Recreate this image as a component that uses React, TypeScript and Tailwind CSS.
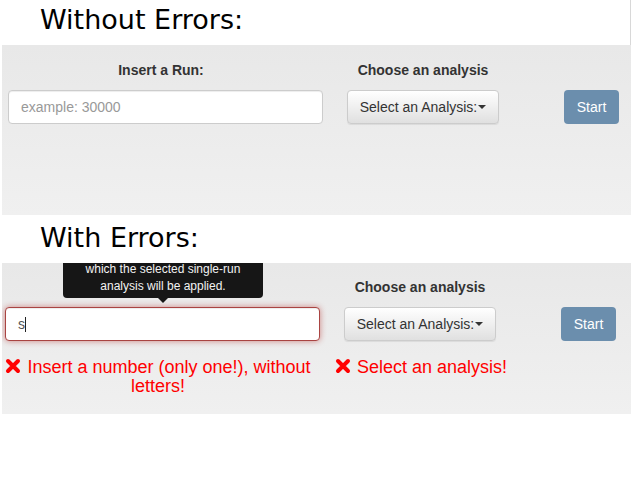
import React from "react";

function XIcon({ className = "" }: { className?: string }) {
  return (
    <svg viewBox="0 0 16 16" className={className} aria-hidden>
      <path d="M3 3 L13 13 M13 3 L3 13" stroke="#ff0000" strokeWidth="4" strokeLinecap="round" fill="none" />
    </svg>
  );
}

function Caret() {
  return (
    <span className="inline-block ml-[1px] align-middle w-0 h-0 border-t-[4px] border-t-[#333] border-x-[4px] border-x-transparent" />
  );
}

function AnalysisDropdown() {
  return (
    <div className="h-[34px] w-[152px] flex items-center justify-center rounded-[4px] border border-[#cccccc] bg-gradient-to-b from-white to-[#e0e0e0] shadow-[inset_0_1px_0_rgba(255,255,255,.15),0_1px_1px_rgba(0,0,0,.075)] text-[14px] text-[#333]">
      Select an Analysis:
      <Caret />
    </div>
  );
}

function StartButton() {
  return (
    <div className="h-[34px] w-[55px] flex items-center justify-center rounded-[4px] bg-[#6b8ead] text-[14px] text-white">
      Start
    </div>
  );
}

function Panel({ errors }: { errors: boolean }) {
  const pad = errors ? "pl-[3px] pt-[14px] h-[151px]" : "pl-[6px] pt-[15px] h-[170px]";
  return (
    <div className={`relative ml-[2px] w-[629px] overflow-hidden bg-gradient-to-b from-[#e8e8e8] to-[#f0f0f0] ${pad}`}>
      <div className="flex items-start">
        {/* run column */}
        <div className="w-[315px] flex flex-col">
          <div className="h-[20px] leading-[20px] pr-[9px] text-center text-[14px] font-bold text-[#333]">Insert a Run:</div>
          <div className="relative mt-[10px]">
            {errors && (
              <div className="absolute left-[58px] bottom-[38px] w-[200px] z-10">
                <div className="rounded-[4px] bg-[#161616] px-[8px] py-[3px] text-center text-[12px] leading-[17px] text-[#f2f2f2]">
                  Insert the run number to
                  <br />
                  which the selected single-run
                  <br />
                  analysis will be applied.
                </div>
                <div className="mx-auto w-0 h-0 border-t-[5px] border-t-[#161616] border-x-[5px] border-x-transparent" />
              </div>
            )}
            <div
              className={`h-[34px] w-[315px] flex items-center rounded-[4px] bg-white px-[12px] text-[14px] ${
                errors
                  ? "border border-[#a94442] shadow-[inset_0_1px_1px_rgba(0,0,0,.075),0_0_6px_#ce8483]"
                  : "border border-[#cccccc] shadow-[inset_0_1px_1px_rgba(0,0,0,.075)]"
              }`}
            >
              {errors ? (
                <>
                  <span className="text-[#555]">s</span>
                  <span className="inline-block w-[1px] h-[15px] bg-[#222]" />
                </>
              ) : (
                <span className="text-[#999]">example: 30000</span>
              )}
            </div>
          </div>
          {errors && (
            <div className="mt-[17px] w-[306px] text-center text-[18px] leading-[19px] text-[#ff0000] whitespace-nowrap">
              <XIcon className="inline-block w-[16px] h-[16px] mr-[6px] align-[-1px]" />
              Insert a number (only one!), without
              <br />
              letters!
            </div>
          )}
        </div>

        {/* analysis column */}
        <div className="ml-[15px] w-[170px] flex flex-col items-center">
          <div className="h-[20px] leading-[20px] text-center text-[14px] font-bold text-[#333]">Choose an analysis</div>
          <div className="mt-[10px]">
            <AnalysisDropdown />
          </div>
          {errors && (
            <div className="self-start mt-[17px] text-[18px] leading-[19px] text-[#ff0000] whitespace-nowrap">
              <XIcon className="inline-block w-[16px] h-[16px] mr-[6px] align-[-1px]" />
              Select an analysis!
            </div>
          )}
        </div>

        {/* start column */}
        <div className="ml-[56px] pt-[30px]">
          <StartButton />
        </div>
      </div>
    </div>
  );
}

export default function App() {
  return (
    <div className="w-[632px] h-[499px] bg-white font-['Liberation_Sans',Arial,sans-serif]">
      <div className="h-[45px] w-[631px] border-r border-[#d8d8d8] pl-[40px] pt-[5px] text-[27px] leading-[30px] text-black font-['DejaVu_Sans',sans-serif]">
        Without Errors:
      </div>
      <Panel errors={false} />
      <div className="h-[48px] pl-[40px] pt-[8px] text-[27px] leading-[30px] text-black font-['DejaVu_Sans',sans-serif]">
        With Errors:
      </div>
      <Panel errors={true} />
    </div>
  );
}
